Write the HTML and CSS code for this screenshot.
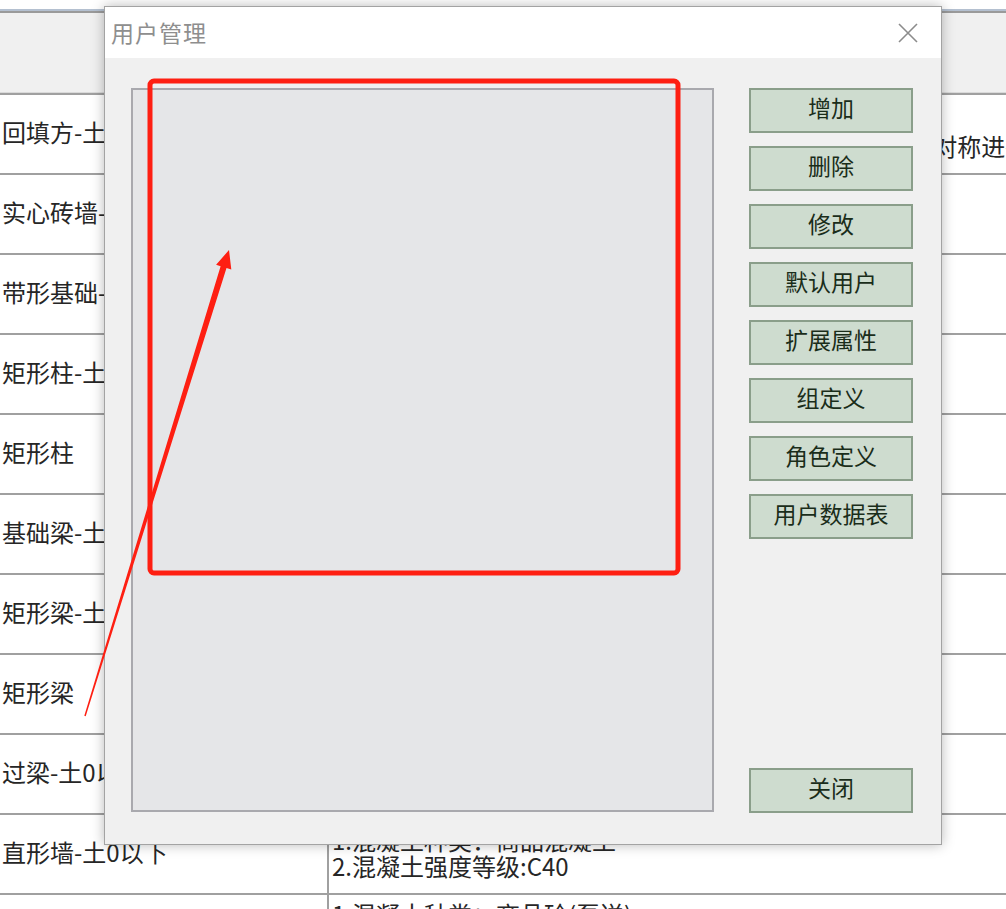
FILE: index.html
```html
<!DOCTYPE html>
<html lang="zh-CN">
<head>
<meta charset="utf-8">
<title>用户管理</title>
<link rel="stylesheet" href="styles.css">
</head>
<body>
<div class="page">
  <div class="topline"></div>
  <div class="thead"></div>
  <div class="table">
    <div class="row">
      <div class="c1">回填方-土0以下</div>
      <div class="c2"><div>1.土质要求：素土</div><div>2.回填要求：土方分层回填夯实，基础与墙体的内外两侧 对称进行</div></div>
    </div>
    <div class="row">
      <div class="c1">实心砖墙-土0以下</div>
      <div class="c2"><div>1.砖品种：实心砖</div><div>2.砂浆强度等级：M5</div></div>
    </div>
    <div class="row">
      <div class="c1">带形基础-土0以下</div>
      <div class="c2"><div>1.混凝土种类：商品混凝土</div><div>2.混凝土强度等级：C30</div></div>
    </div>
    <div class="row">
      <div class="c1">矩形柱-土0以下</div>
      <div class="c2"><div>1.混凝土种类：商品混凝土</div><div>2.混凝土强度等级：C30</div></div>
    </div>
    <div class="row">
      <div class="c1">矩形柱</div>
      <div class="c2"><div>1.混凝土种类：商品混凝土</div><div>2.混凝土强度等级：C30</div></div>
    </div>
    <div class="row">
      <div class="c1">基础梁-土0以下</div>
      <div class="c2"><div>1.混凝土种类：商品混凝土</div><div>2.混凝土强度等级：C30</div></div>
    </div>
    <div class="row">
      <div class="c1">矩形梁-土0以下</div>
      <div class="c2"><div>1.混凝土种类：商品混凝土</div><div>2.混凝土强度等级：C30</div></div>
    </div>
    <div class="row">
      <div class="c1">矩形梁</div>
      <div class="c2"><div>1.混凝土种类：商品混凝土</div><div>2.混凝土强度等级：C30</div></div>
    </div>
    <div class="row">
      <div class="c1">过梁-土0以下</div>
      <div class="c2"><div>1.混凝土种类：商品混凝土</div><div>2.混凝土强度等级：C25</div></div>
    </div>
    <div class="row">
      <div class="c1">直形墙-土0以下</div>
      <div class="c2"><div>1.混凝土种类：商品混凝土</div><div>2.混凝土强度等级:C40</div></div>
    </div>
    <div class="row">
      <div class="c1"></div>
      <div class="c2 c2-top"><div>1.混凝土种类：商品砼(泵送)</div><div>2.混凝土强度等级:C30</div></div>
    </div>
  </div>

  <div class="dialog">
    <div class="titlebar">
      <span class="title">用户管理</span>
      <svg class="xbtn" width="20" height="20" viewBox="0 0 20 20"><path d="M1 1 L19 19 M19 1 L1 19" stroke="#8c8c8c" stroke-width="1.6" fill="none"/></svg>
    </div>
    <div class="dbody">
      <div class="listbox"></div>
      <div class="btns">
        <div class="btn">增加</div>
        <div class="btn">删除</div>
        <div class="btn">修改</div>
        <div class="btn">默认用户</div>
        <div class="btn">扩展属性</div>
        <div class="btn">组定义</div>
        <div class="btn">角色定义</div>
        <div class="btn">用户数据表</div>
        <div class="btn btn-close">关闭</div>
      </div>
    </div>
  </div>

  <svg class="annot" width="1006" height="909" viewBox="0 0 1006 909">
    <rect x="150" y="81" width="528" height="492" rx="4" ry="4" fill="none" stroke="#fe1f12" stroke-width="5"/>
    <polygon points="229,250 231.3,269.6 226.5,268 85.7,716.2 84.3,715.8 220.6,266.2 216.1,264.8" fill="#fe1f12"/>
  </svg>
</div>
</body>
</html>
```

FILE: styles.css
```css
html, body {
  margin: 0;
  padding: 0;
  background: #ffffff;
}

body {
  font-family: "Noto Sans CJK SC", "Noto Sans", sans-serif;
  color: #262626;
}

.page {
  position: relative;
  width: 1006px;
  height: 909px;
  overflow: hidden;
}

.topline {
  height: 9px;
  border-bottom: 2px solid #b4c0d0;
}

.thead {
  height: 79px;
  border-top: 2px solid #9a9a9a;
  border-bottom: 1px solid #dadada;
  background: #f0f0f0;
}

.table {
  border-top: 2px solid #a0a0a0;
}

.row {
  display: grid;
  grid-template-columns: 329px 1fr;
  height: 78px;
  border-bottom: 2px solid #a0a0a0;
}

.c1 {
  display: flex;
  align-items: center;
  padding-left: 2px;
  border-right: 2px solid #a0a0a0;
  font-size: 24px;
  line-height: 26px;
  white-space: nowrap;
  overflow: hidden;
  padding-bottom: 4px;
}

.c2 {
  display: flex;
  flex-direction: column;
  justify-content: center;
  padding-left: 3px;
  padding-bottom: 2px;
  font-size: 24px;
  line-height: 26px;
  white-space: nowrap;
  overflow: hidden;
}

.c2-top {
  justify-content: flex-start;
  padding-top: 6px;
  padding-bottom: 0;
}

.dialog {
  position: absolute;
  left: 104px;
  top: 6px;
  width: 838px;
  height: 839px;
  box-sizing: border-box;
  border: 1px solid #a3a3a3;
  background: #f0f0f0;
  box-shadow: 0 0 12px rgba(0, 0, 0, 0.28);
  display: flex;
  flex-direction: column;
}

.titlebar {
  height: 51px;
  background: #ffffff;
  display: flex;
  align-items: center;
  justify-content: space-between;
  padding: 0 23px 0 6px;
}

.title {
  font-size: 23px;
  color: #8e8e8e;
  letter-spacing: 1px;
  padding-bottom: 2px;
}

.xbtn {
  display: block;
  margin-top: 1px;
}

.dbody {
  display: flex;
  gap: 35px;
  padding: 30px 28px 0 26px;
}

.listbox {
  width: 583px;
  height: 724px;
  box-sizing: border-box;
  border: 2px solid #a9a9ae;
  background: #e5e6e8;
}

.btns {
  width: 164px;
  height: 725px;
  display: flex;
  flex-direction: column;
  gap: 13px;
}

.btn {
  height: 45px;
  box-sizing: border-box;
  border: 2px solid #8a9e8a;
  background: #cedccf;
  color: #1a2d1a;
  font-size: 23px;
  display: flex;
  align-items: center;
  justify-content: center;
  padding-bottom: 7px;
}

.btn-close {
  margin-top: auto;
}

.annot {
  position: absolute;
  left: 0;
  top: 0;
  pointer-events: none;
}
```
